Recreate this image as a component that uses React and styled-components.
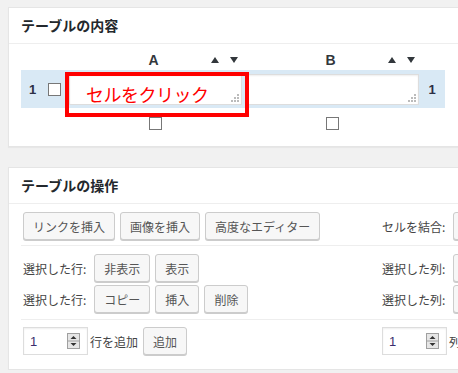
import styled, { createGlobalStyle } from "styled-components";

const GlobalStyle = createGlobalStyle`
  html, body {
    margin: 0;
    padding: 0;
    background: #f1f1f1;
    overflow: hidden;
  }
  body {
    font-family: "Noto Sans CJK JP", "Noto Sans", sans-serif;
    font-size: 12px;
    color: #444;
  }
`;

const Page = styled.div`
  display: flex;
  flex-direction: column;
  gap: 20px;
  padding: 7px 0 0 8px;
  width: 640px;
`;

const Postbox = styled.div`
  width: 620px;
  background: #fff;
  border: 1px solid #e5e5e5;
  box-shadow: 0 1px 1px rgba(0, 0, 0, 0.04);
`;

const BoxTitle = styled.h2`
  margin: 0;
  height: 35px;
  line-height: 35px;
  padding: 0 12px;
  border-bottom: 1px solid #eee;
  font-size: 14px;
  font-weight: 700;
  color: #23282d;
`;

/* ---- table content panel ---- */

const TableWrap = styled.div`
  padding: 6px 12px 8px;
`;

const TRow = styled.div`
  display: grid;
  grid-template-columns: 23px 21px 177px 177px 26px;
  align-items: center;
  width: 424px;
  height: ${(p) => p.$h}px;
  background: ${(p) => (p.$selected ? "#d9e9f5" : "transparent")};
`;

const RowNum = styled.div`
  text-align: center;
  font-size: 13px;
  font-weight: 700;
  color: #2c2f45;
  font-family: "Liberation Sans", Arial, sans-serif;
`;

const CheckCell = styled.div`
  display: flex;
  justify-content: center;
`;

const Check = styled.span`
  display: block;
  width: 13px;
  height: 13px;
  box-sizing: border-box;
  border: 1px solid #777;
  background: #fff;
`;

const ColHead = styled.div`
  display: grid;
  grid-template-columns: 1fr auto 1fr;
  align-items: center;
  padding: 0 4px 0 4px;
  font-family: "Liberation Sans", Arial, sans-serif;
  font-weight: 700;
  font-size: 14px;
  color: #32373c;
`;

const Sorts = styled.div`
  justify-self: end;
  display: flex;
  gap: 11px;
`;

const Cell = styled.div`
  position: relative;
  padding-left: 4px;
  display: flex;
  justify-content: ${(p) => (p.$center ? "center" : "flex-start")};
`;

const TextBox = styled.div`
  position: relative;
  width: 173px;
  height: 31px;
  box-sizing: border-box;
  background: #fff;
  border: 1px solid #ddd;
  box-shadow: inset 0 1px 2px rgba(0, 0, 0, 0.07);
`;

const Grip = styled.svg`
  position: absolute;
  right: 2px;
  bottom: 2px;
`;

const Callout = styled.div`
  position: absolute;
  left: 0;
  top: -2px;
  width: 184px;
  height: 45px;
  box-sizing: border-box;
  border: 4px solid #f00;
  display: flex;
  align-items: center;
  padding-left: 17px;
  color: #f00;
  font-size: 18px;
  letter-spacing: -0.5px;
  z-index: 2;
`;

/* ---- operations panel ---- */

const Ops = styled.div`
  padding: 0 12px;
`;

const Section = styled.div`
  display: flex;
  flex-direction: column;
  gap: 3px;
  padding: ${(p) => p.$pad};
  border-bottom: ${(p) => (p.$last ? "none" : "1px solid #eee")};
`;

const OpRow = styled.div`
  display: grid;
  grid-template-columns: 359px auto;
  align-items: center;
  padding-left: 2px;
`;

const Group = styled.div`
  display: flex;
  align-items: center;
  gap: 5px;
  white-space: nowrap;
`;

const Label = styled.span`
  margin-right: ${(p) => (p.$tight ? "0" : "3px")};
  margin-left: ${(p) => (p.$tight ? "-3px" : "0")};
  color: #444;
`;

const Button = styled.button`
  height: 28px;
  padding: 0 9px;
  border: 1px solid #ccc;
  border-radius: 3px;
  background: #f7f7f7;
  box-shadow: 0 1px 0 #ccc;
  color: #555;
  font-family: inherit;
  font-size: 12px;
  white-space: nowrap;
  cursor: pointer;
`;

const Spinner = styled.div`
  display: flex;
  align-items: center;
  justify-content: space-between;
  width: 65px;
  height: 28px;
  box-sizing: border-box;
  padding: 0 7px 0 6px;
  border: 1px solid #ddd;
  box-shadow: inset 0 1px 2px rgba(0, 0, 0, 0.07);
  background: #fff;
  color: #3a2d6e;
  font-family: "Liberation Sans", Arial, sans-serif;
  font-size: 13px;
`;

function Arrow({ down }) {
  return (
    <svg width="8" height="6" viewBox="0 0 8 6">
      <path d={down ? "M0 0h8L4 6z" : "M0 6h8L4 0z"} fill="#32373c" />
    </svg>
  );
}

function GripDots() {
  const dots = [[6, 0], [3, 3], [6, 3], [0, 6], [3, 6], [6, 6]];
  return (
    <Grip width="8" height="8" viewBox="0 0 8 8">
      {dots.map(([x, y]) => (
        <rect key={x + "-" + y} x={x} y={y} width="2" height="2" fill="#bbb" />
      ))}
    </Grip>
  );
}

function SpinButtons() {
  return (
    <svg width="13" height="16" viewBox="0 0 13 16">
      <rect x="0.5" y="0.5" width="12" height="15" fill="#e6e6e6" stroke="#a0a0a0" />
      <line x1="1" y1="8" x2="12" y2="8" stroke="#a0a0a0" />
      <path d="M3.5 6h6L6.5 3z" fill="#333" />
      <path d="M3.5 10h6L6.5 13z" fill="#333" />
    </svg>
  );
}

function NumberField() {
  return (
    <Spinner>
      <span>1</span>
      <SpinButtons />
    </Spinner>
  );
}

function ContentTable() {
  return (
    <TableWrap>
      <TRow $h={20}>
        <div />
        <div />
        <ColHead>
          <span />
          <span>A</span>
          <Sorts><Arrow /><Arrow down /></Sorts>
        </ColHead>
        <ColHead>
          <span />
          <span>B</span>
          <Sorts><Arrow /><Arrow down /></Sorts>
        </ColHead>
        <div />
      </TRow>
      <TRow $h={38} $selected>
        <RowNum>1</RowNum>
        <CheckCell><Check /></CheckCell>
        <Cell>
          <TextBox><GripDots /></TextBox>
          <Callout>セルをクリック</Callout>
        </Cell>
        <Cell>
          <TextBox><GripDots /></TextBox>
        </Cell>
        <RowNum>1</RowNum>
      </TRow>
      <TRow $h={30}>
        <div />
        <div />
        <Cell $center><Check /></Cell>
        <Cell $center><Check /></Cell>
        <div />
      </TRow>
    </TableWrap>
  );
}

function Operations() {
  return (
    <Ops>
      <Section $pad="8px 0 5px">
        <OpRow>
          <Group>
            <Button>リンクを挿入</Button>
            <Button>画像を挿入</Button>
            <Button>高度なエディター</Button>
          </Group>
          <Group>
            <Label>セルを結合:</Label>
            <Button>結合</Button>
          </Group>
        </OpRow>
      </Section>
      <Section $pad="8px 0 6px">
        <OpRow>
          <Group>
            <Label>選択した行:</Label>
            <Button>非表示</Button>
            <Button>表示</Button>
          </Group>
          <Group>
            <Label>選択した列:</Label>
            <Button>非表示</Button>
          </Group>
        </OpRow>
        <OpRow>
          <Group>
            <Label>選択した行:</Label>
            <Button>コピー</Button>
            <Button>挿入</Button>
            <Button>削除</Button>
          </Group>
          <Group>
            <Label>選択した列:</Label>
            <Button>コピー</Button>
          </Group>
        </OpRow>
      </Section>
      <Section $pad="7px 0 14px" $last>
        <OpRow>
          <Group>
            <NumberField />
            <Label $tight>行を追加</Label>
            <Button>追加</Button>
          </Group>
          <Group>
            <NumberField />
            <Label $tight>列を追加</Label>
            <Button>追加</Button>
          </Group>
        </OpRow>
      </Section>
    </Ops>
  );
}

export default function App() {
  return (
    <>
      <GlobalStyle />
      <Page>
        <Postbox>
          <BoxTitle>テーブルの内容</BoxTitle>
          <ContentTable />
        </Postbox>
        <Postbox>
          <BoxTitle>テーブルの操作</BoxTitle>
          <Operations />
        </Postbox>
      </Page>
    </>
  );
}
